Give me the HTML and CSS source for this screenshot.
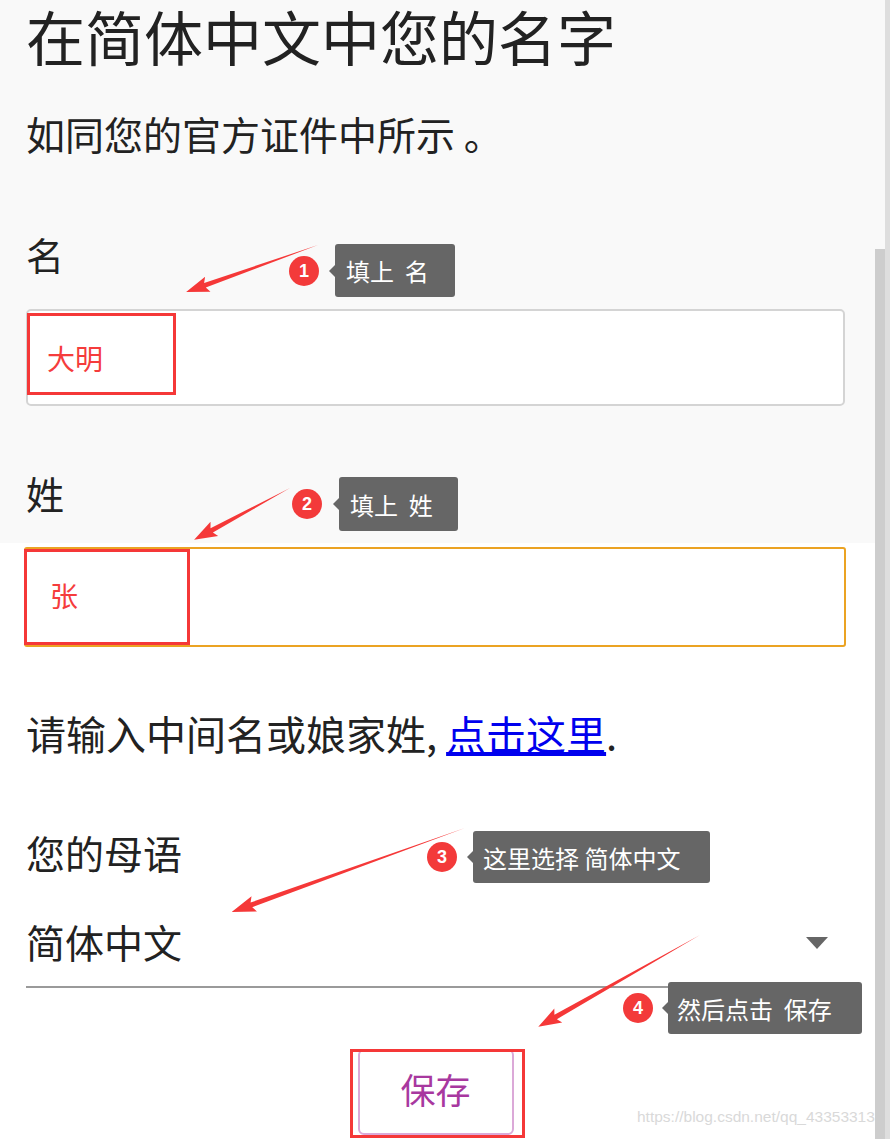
FILE: index.html
```html
<!DOCTYPE html>
<html lang="zh-CN">
<head>
    <meta charset="UTF-8">
    <meta name="viewport" content="width=device-width, initial-scale=1.0">
    <title>在简体中文中您的名字</title>
    <link rel="stylesheet" href="styles.css">
</head>
<body>

<div class="page">
    <section class="intro">
        <h1 class="title">在简体中文中您的名字</h1>
        <p class="lead">如同您的官方证件中所示 。</p>
        <label class="label">名</label>
        <div class="field">大明</div>
        <label class="label">姓</label>
    </section>

    <section class="rest">
        <div class="field focused">张</div>
        <p class="note">请输入中间名或娘家姓, <a href="#">点击这里</a>.</p>
        <label class="label lang-label">您的母语</label>
        <div class="select">
            <span>简体中文</span>
            <span class="caret"></span>
        </div>
        <div class="actions">
            <button class="save">保存</button>
        </div>
    </section>

    <!-- annotations drawn on top of the screenshot -->
    <svg class="arrows" width="890" height="1139" viewBox="0 0 890 1139">
        <g transform="translate(318 245) rotate(160.4)">
            <path d="M0 0 L120 -2.5 L117 -8 L140 0 L117 8 L120 2.5 Z"/>
        </g>
        <g transform="translate(290 488) rotate(151.6)">
            <path d="M0 0 L89 -2.5 L86 -8 L109 0 L86 8 L89 2.5 Z"/>
        </g>
        <g transform="translate(465 828) rotate(160.2)">
            <path d="M0 0 L227 -2.5 L224 -8 L248 0 L224 8 L227 2.5 Z"/>
        </g>
        <g transform="translate(700 935) rotate(150.4)">
            <path d="M0 0 L166 -2.5 L163 -8 L186 0 L163 8 L166 2.5 Z"/>
        </g>
    </svg>

    <div class="mark mark-first"></div>
    <div class="mark mark-last"></div>
    <div class="mark mark-save"></div>

    <div class="tip tip-1"><span class="badge">1</span><span class="bubble">填上  名</span></div>
    <div class="tip tip-2"><span class="badge">2</span><span class="bubble">填上  姓</span></div>
    <div class="tip tip-3"><span class="badge">3</span><span class="bubble">这里选择 简体中文</span></div>
    <div class="tip tip-4"><span class="badge">4</span><span class="bubble">然后点击  保存</span></div>

    <div class="scroll-track"></div>
    <div class="scroll-thumb"></div>

    <div class="watermark">https://blog.csdn.net/qq_43353313</div>
</div>

</body>
</html>
```

FILE: styles.css
```css
body {
    margin: 0;
    font-family: "Noto Sans CJK SC", "Noto Sans", sans-serif;
    color: #222;
    background: #fff;
}
.page {
    position: relative;
    width: 890px;
    height: 1139px;
    overflow: hidden;
}
.intro {
    background: #f9f9f9;
    padding: 0 45px 26px 26px;
}
.rest {
    padding: 4px 45px 0 26px;
}
.title {
    margin: 0;
    font-size: 59px;
    font-weight: 400;
    line-height: 72px;
}
.lead {
    margin: 36px 0 0;
    font-size: 39px;
    line-height: 50px;
}
.label {
    display: block;
    margin-top: 72px;
    font-size: 38px;
    line-height: 48px;
}
.intro .field + .label {
    margin-top: 63px;
}
.field {
    display: flex;
    align-items: center;
    box-sizing: border-box;
    height: 97px;
    margin-top: 31px;
    padding-left: 19px;
    background: #fff;
    border: 2px solid #d4d4d4;
    border-radius: 5px;
    color: #f53c3c;
    font-size: 28px;
}
.field.focused {
    height: 100px;
    margin: 0 -1px 0 -2px;
    padding: 0 0 4px 24px;
    border-color: #eba323;
    border-radius: 3px;
}
.note {
    margin: 61px 0 0;
    font-size: 40px;
    line-height: 50px;
}
.note a {
    color: #0000ee;
}
.lang-label {
    margin-top: 69px;
    font-size: 39px;
    line-height: 50px;
}
.select {
    display: flex;
    align-items: center;
    justify-content: space-between;
    margin-top: 39px;
    padding: 0 17px 20px 0;
    border-bottom: 2px solid #9a9a9a;
    font-size: 39px;
    line-height: 50px;
}
.caret {
    width: 0;
    height: 0;
    border-left: 11px solid transparent;
    border-right: 11px solid transparent;
    border-top: 12px solid #666;
    margin-top: 4px;
}
.actions {
    display: flex;
    justify-content: center;
    margin-top: 61px;
}
.save {
    width: 156px;
    height: 86px;
    padding: 0 0 8px;
    background: #fff;
    border: 2px solid #dba9d8;
    border-radius: 6px;
    color: #a8389f;
    font-family: inherit;
    font-size: 35px;
}

.arrows {
    position: absolute;
    top: 0;
    left: 0;
    fill: #f53838;
}
.mark {
    position: absolute;
    box-sizing: border-box;
    border: 3px solid #f53838;
}
.mark-first { left: 27px; top: 313px; width: 149px; height: 82px; }
.mark-last  { left: 24px; top: 549px; width: 166px; height: 96px; }
.mark-save  { left: 350px; top: 1049px; width: 175px; height: 89px; }

.tip {
    position: absolute;
    display: flex;
    align-items: center;
}
.badge {
    width: 30px;
    height: 30px;
    border-radius: 50%;
    background: #f33a3a;
    color: #fff;
    font-family: "Liberation Sans", Arial, sans-serif;
    font-size: 18px;
    font-weight: bold;
    line-height: 30px;
    text-align: center;
}
.bubble {
    position: relative;
    display: flex;
    align-items: center;
    box-sizing: border-box;
    margin-left: 16px;
    padding: 0 20px 0 11px;
    background: #666;
    border-radius: 3px;
    color: #fff;
    font-size: 24px;
    white-space: pre;
}
.bubble::before {
    content: "";
    position: absolute;
    left: -6px;
    top: 50%;
    margin-top: -6px;
    border-top: 6px solid transparent;
    border-bottom: 6px solid transparent;
    border-right: 6px solid #666;
}
.tip-1 { left: 289px; top: 244px; }
.tip-1 .bubble { width: 120px; height: 53px; }
.tip-2 { left: 292px; top: 477px; }
.tip-2 .bubble { width: 119px; height: 54px; margin-left: 17px; }
.tip-3 { left: 427px; top: 831px; }
.tip-3 .bubble { width: 237px; height: 52px; padding-left: 10px; }
.tip-4 { left: 623px; top: 982px; }
.tip-4 .bubble { width: 194px; height: 52px; margin-left: 15px; padding-left: 9px; }

.scroll-track {
    position: absolute;
    top: 0;
    right: 0;
    width: 5px;
    height: 100%;
    background: #dedede;
}
.scroll-thumb {
    position: absolute;
    top: 249px;
    right: 5px;
    width: 10px;
    bottom: 0;
    background: #cdcdcd;
}
.watermark {
    position: absolute;
    left: 637px;
    top: 1108px;
    font-family: "Liberation Sans", Arial, sans-serif;
    font-size: 15.5px;
    color: #d9d9d9;
}
```
